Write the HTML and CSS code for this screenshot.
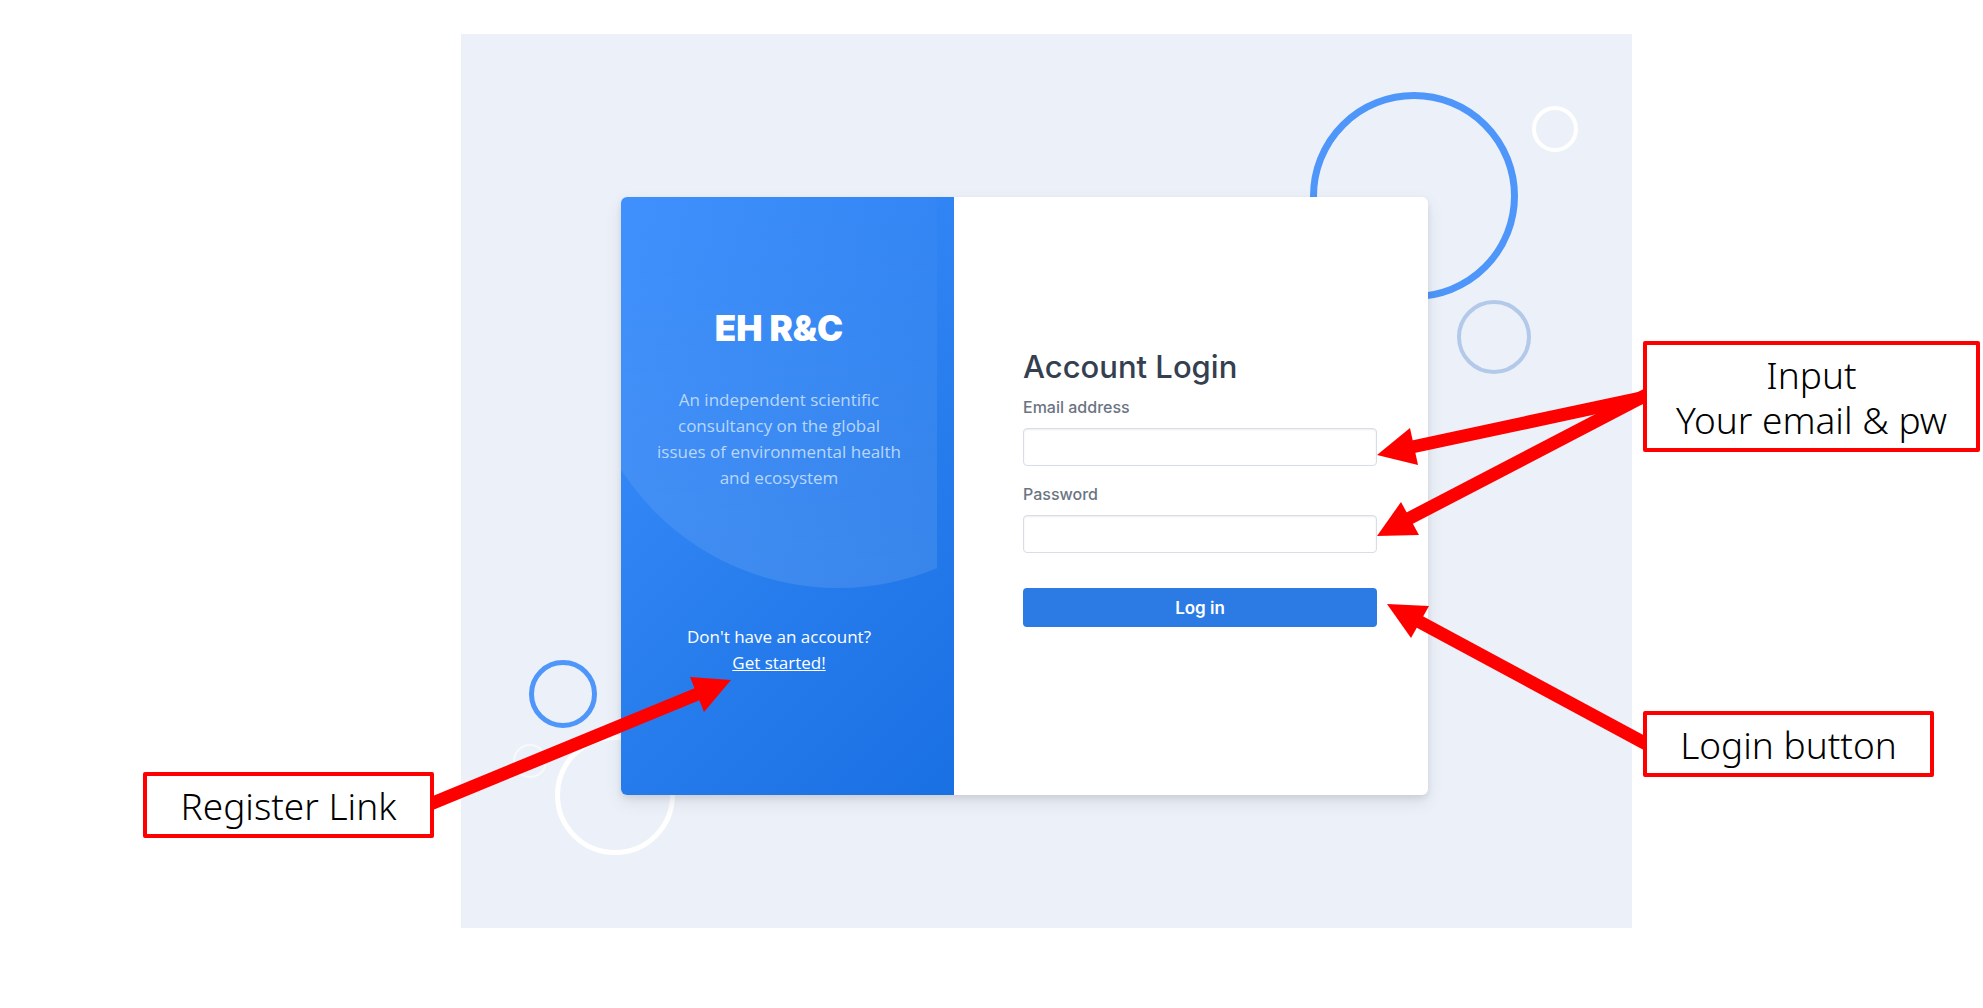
FILE: index.html
```html
<!DOCTYPE html>
<html lang="en">
<head>
<meta charset="utf-8">
<title>EH R&amp;C – Account Login</title>
<link rel="stylesheet" href="styles.css">
</head>
<body>
<div class="slide">
  <aside class="notes notes-left">
    <p class="callout">Register Link</p>
  </aside>

  <main class="scene">
    <span class="ring ring-blue-large"></span>
    <span class="ring ring-white-small"></span>
    <span class="ring ring-pale"></span>
    <span class="ring ring-blue-small"></span>
    <span class="ring ring-white-tiny"></span>
    <span class="ring ring-white-large"></span>

    <div class="card">
      <section class="panel">
        <div class="panel-body">
          <h1 class="brand">EH R&amp;C</h1>
          <p class="intro">An independent scientific<br>consultancy on the global<br>issues of environmental health<br>and ecosystem</p>
          <p class="signup">Don't have an account?<br><a href="#register">Get started!</a></p>
        </div>
      </section>
      <form class="login">
        <h2 class="title">Account Login</h2>
        <div class="field">
          <label for="email">Email address</label>
          <input id="email" type="email">
        </div>
        <div class="field">
          <label for="password">Password</label>
          <input id="password" type="password">
        </div>
        <button class="submit" type="submit">Log in</button>
      </form>
    </div>
  </main>

  <aside class="notes notes-right">
    <p class="callout callout-wide">Input<br>Your email &amp; pw</p>
    <p class="callout">Login button</p>
  </aside>

  <svg class="arrows" viewBox="0 0 1983 928" aria-hidden="true">
    <g stroke="#f00" stroke-width="13">
      <path d="M1650 396 1412 447"/>
      <path d="M1650 393 1408 519"/>
      <path d="M1650 746 1418 621"/>
      <path d="M428 805 700 693"/>
    </g>
    <g fill="#f00">
      <path d="M1377 455 1410 428 1418 465z"/>
      <path d="M1377 536 1401 502 1419 535z"/>
      <path d="M1387 604 1429 606 1411 638z"/>
      <path d="M731 680 690 677 704 712z"/>
    </g>
  </svg>
</div>
</body>
</html>
```
FILE: styles.css
```css
* {
  box-sizing: border-box;
}

body {
  margin: 0;
  background: #fff;
  font-family: "Open Sans", "Noto Sans", sans-serif;
}

h1,
h2,
p {
  margin: 0;
}

.slide {
  position: relative;
  display: grid;
  grid-template-columns: 461fr 1171fr 351fr;
  padding-top: 34px;
}

/* Annotation boxes */
.notes {
  position: relative;
  z-index: 2;
  display: flex;
  flex-direction: column;
}

.notes-left {
  align-items: flex-end;
  padding: 738px 27px 0 0;
}

.notes-right {
  align-items: flex-start;
  gap: 259px;
  padding: 307px 0 0 11px;
}

.callout {
  width: 291px;
  padding: 7px 0 6px;
  border: 4px solid #f00;
  border-radius: 2px;
  background: #fff;
  color: #000;
  font-family: "Noto Sans", "Open Sans", sans-serif;
  font-weight: 300;
  font-size: 37px;
  line-height: 45px;
  text-align: center;
  white-space: nowrap;
}

.callout-wide {
  width: 337px;
}

.arrows {
  position: absolute;
  z-index: 1;
  inset: 0;
  width: 100%;
  pointer-events: none;
}

/* Login scene */
.scene {
  position: relative;
  padding: 163px 204px 133px 160px;
  background: #ecf1f9;
}

.ring {
  position: absolute;
  border: 4px solid #fff;
  border-radius: 50%;
}

.ring-blue-large {
  top: 58px;
  right: 114px;
  width: 208px;
  height: 208px;
  border: 7px solid #4e96f9;
}

.ring-white-small {
  top: 72px;
  right: 54px;
  width: 46px;
  height: 46px;
}

.ring-pale {
  top: 266px;
  right: 101px;
  width: 74px;
  height: 74px;
  border-color: #b3c9e9;
}

.ring-blue-small {
  bottom: 200px;
  left: 68px;
  width: 68px;
  height: 68px;
  border: 5px solid #4e96f9;
}

.ring-white-tiny {
  bottom: 150px;
  left: 52px;
  width: 34px;
  height: 34px;
  border: 2px solid #f7f9fb;
}

.ring-white-large {
  bottom: 73px;
  left: 94px;
  width: 120px;
  height: 120px;
  border-width: 5px;
}

.card {
  position: relative;
  display: grid;
  grid-template-columns: 333fr 474fr;
  min-height: 598px;
  overflow: hidden;
  border-radius: 6px;
  background: #fff;
  box-shadow: 0 7px 16px rgba(65, 69, 88, 0.12), 0 3px 6px rgba(0, 0, 0, 0.08);
}

.panel {
  padding-right: 17px;
  background: linear-gradient(-45deg, #1970e2, #3d8ffd);
}

.panel-body {
  position: relative;
  height: 100%;
  padding-top: 106px;
  overflow: hidden;
  color: #fff;
  text-align: center;
}

.panel-body::before {
  content: "";
  position: absolute;
  top: -125px;
  left: -41px;
  width: 516px;
  height: 516px;
  border-radius: 50%;
  background: linear-gradient(rgba(255, 255, 255, 0.01) 24%, rgba(255, 255, 255, 0.1));
}

.brand,
.intro,
.signup {
  position: relative;
}

.brand {
  font-family: Inter, sans-serif;
  font-weight: 900;
  font-size: 35px;
  line-height: 50px;
}

.intro,
.signup {
  font-size: 17px;
  line-height: 26px;
}

.intro {
  margin-top: 34px;
  color: #b8d7fb;
}

.signup {
  margin-top: 133px;
}

.signup a {
  color: inherit;
}

.login {
  padding: 152px 51px 0 69px;
  font-family: Inter, sans-serif;
}

.title {
  margin-bottom: 10px;
  color: #344050;
  font-weight: 500;
  font-size: 31px;
  line-height: 36px;
}

.field {
  margin-bottom: 16px;
}

.field label {
  display: block;
  margin-bottom: 9px;
  color: #6b7482;
  font-weight: 500;
  font-size: 16px;
  line-height: 24px;
}

.field input {
  display: block;
  width: 100%;
  height: 38px;
  padding: 0 12px;
  border: 1px solid #d8dde8;
  border-radius: 4px;
  background: #fff;
  box-shadow: inset 0 1px 2px rgba(0, 0, 0, 0.08);
  font: inherit;
}

.submit {
  display: block;
  width: 100%;
  height: 39px;
  margin-top: 35px;
  border: 0;
  border-radius: 4px;
  background: #2c7be5;
  color: #fff;
  font-family: inherit;
  font-weight: 600;
  font-size: 17px;
}
```
